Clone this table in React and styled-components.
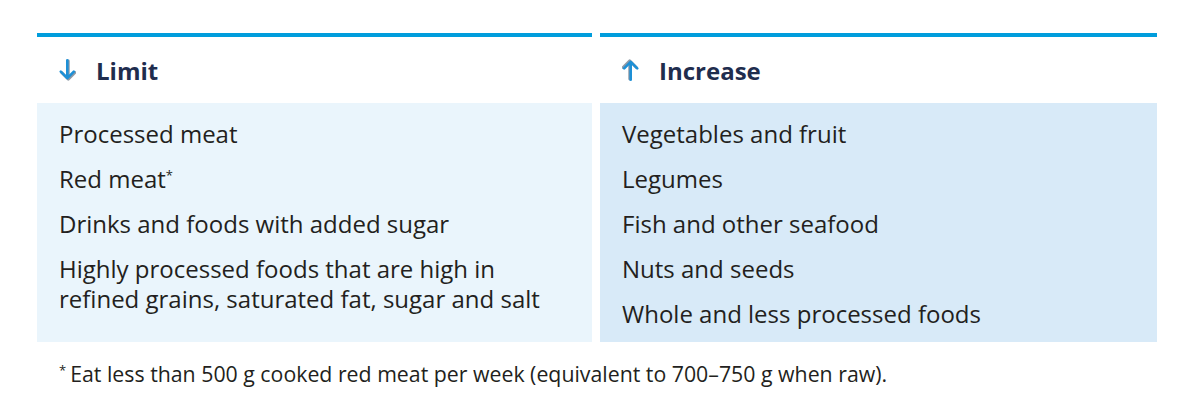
import React from "react";
import styled, { createGlobalStyle } from "styled-components";

const Global = createGlobalStyle`
  html, body { margin: 0; padding: 0; background: #ffffff; }
  body { font-family: "Open Sans", "Noto Sans", sans-serif; color: #231f20; }
`;

const Page = styled.div`
  padding: 33px 43px 0 37px;
  width: 1120px;
`;

const Columns = styled.div`
  display: grid;
  grid-template-columns: 555px 557px;
  column-gap: 8px;
`;

const Column = styled.section`
  display: flex;
  flex-direction: column;
  border-top: 4px solid #009ddc;
`;

const Header = styled.h2`
  margin: 0;
  height: 66px;
  display: flex;
  align-items: center;
  gap: 20px;
  padding-left: 22px;
  font-size: 24px;
  font-weight: 700;
  color: #1f2d4e;
  box-sizing: border-box;
`;

const Panel = styled.ul`
  list-style: none;
  margin: 0;
  padding: 16px 22px 13px 22px;
  background: ${(p) => p.$bg};
  display: flex;
  flex-direction: column;
  gap: 15px;
  flex: 1;
`;

const Item = styled.li`
  font-size: 24px;
  line-height: 30px;
  color: #231f20;
`;

const Sup = styled.sup`
  font-size: 13px;
  vertical-align: 8px;
  line-height: 0;
`;

const Footnote = styled.p`
  margin: 17px 0 0 22px;
  font-size: 21.3px;
  line-height: 30px;
  color: #231f20;
`;

const Star = styled.span`
  font-size: 13px;
  vertical-align: 7px;
  line-height: 0;
  margin-right: 4px;
`;

const Arrow = ({ up }) => (
  <svg width="17" height="24" viewBox="0 0 17 24" style={{ transform: up ? "rotate(180deg)" : "none" }}>
    <g fill="none" strokeLinecap="round" strokeLinejoin="round">
      <path d="M9.3 3 V20.5 M2.6 14.6 L9.3 21.3 L16 14.6" stroke="#8f99a5" strokeWidth="2.8" />
      <path d="M8.3 2.2 V19.6 M1.8 13.6 L8.3 20.1 L14.8 13.6" stroke="#1e90d6" strokeWidth="2.6" />
    </g>
  </svg>
);

export default function App() {
  return (
    <Page>
      <Global />
      <Columns>
        <Column>
          <Header>
            <Arrow />
            Limit
          </Header>
          <Panel $bg="#eaf5fc">
            <Item>Processed meat</Item>
            <Item>
              Red meat<Sup>*</Sup>
            </Item>
            <Item>Drinks and foods with added sugar</Item>
            <Item>
              Highly processed foods that are high in
              <br />
              refined grains, saturated fat, sugar and salt
            </Item>
          </Panel>
        </Column>
        <Column>
          <Header>
            <Arrow up />
            Increase
          </Header>
          <Panel $bg="#d8eaf8">
            <Item>Vegetables and fruit</Item>
            <Item>Legumes</Item>
            <Item>Fish and other seafood</Item>
            <Item>Nuts and seeds</Item>
            <Item>Whole and less processed foods</Item>
          </Panel>
        </Column>
      </Columns>
      <Footnote>
        <Star>*</Star>Eat less than 500 g cooked red meat per week (equivalent to 700–750 g when raw).
      </Footnote>
    </Page>
  );
}
